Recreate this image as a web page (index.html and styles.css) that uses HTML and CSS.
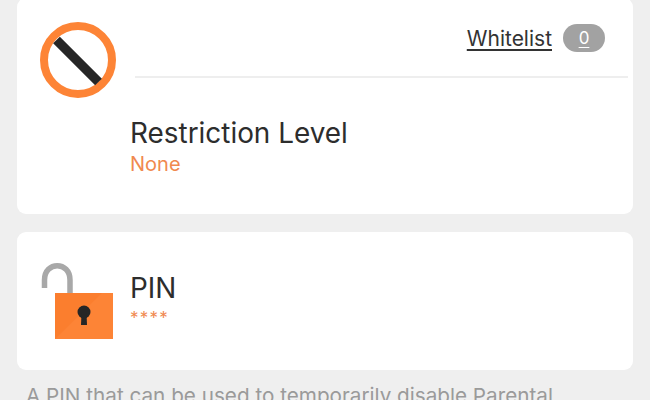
FILE: index.html
```html
<!DOCTYPE html>
<html>
  <head>
    <link rel="stylesheet" href="styles.css">
  </head>
  <body>
    <div class="page">
      <div class="card card-restriction">
        <div class="top-row">
          <svg class="icon-block" viewBox="0 0 76 76">
            <circle cx="38" cy="38" r="34" fill="#fff" stroke="#fd8436" stroke-width="8"/>
            <path d="M16.5 18 L58.5 60" stroke="#262626" stroke-width="9.5" fill="none"/>
          </svg>
          <div class="top-right">
            <div class="whitelist-row">
              <span class="whitelist-link">Whitelist</span>
              <span class="badge">0</span>
            </div>
          </div>
        </div>
        <p class="title">Restriction Level</p>
        <p class="value">None</p>
      </div>

      <div class="card card-pin">
        <svg class="icon-lock" viewBox="0 0 72 76">
          <path d="M3.5 25 V17 C3.5 -2 29 -2 29 17 V32" stroke="#a8a8a8" stroke-width="5.5" fill="none"/>
          <rect x="14" y="30" width="58" height="46" fill="#fd8436"/>
          <path d="M14 76 L61 30 H14 Z" fill="#fb7e2e"/>
          <circle cx="43" cy="49" r="6.5" fill="#262626"/>
          <path d="M40.5 50 H45.5 L46 62 H40 Z" fill="#262626"/>
        </svg>
        <div class="pin-text">
          <p class="title">PIN</p>
          <p class="stars">****</p>
        </div>
      </div>

      <p class="note">A PIN that can be used to temporarily disable Parental Controls.</p>
    </div>
  </body>
</html>
```

FILE: styles.css
```css
html,
body{
  margin: 0;
  height: 400px;
  overflow: hidden;
  background-color: #efefef;
}
body{
  font-family: Inter, "Noto Sans", sans-serif;
}
p{
  margin: 0;
}
.page{
  margin-top: -2px;
  padding: 0 17px;
}
.card{
  background-color: white;
  border-radius: 9px;
}
.card-restriction{
  height: 216px;
  padding-top: 24px;
  box-sizing: border-box;
  margin-bottom: 18px;
}
.top-row{
  display: flex;
  padding-left: 23px;
  padding-right: 5px;
}
.icon-block{
  width: 76px;
  height: 76px;
  flex-shrink: 0;
}
.top-right{
  flex: 1;
  margin-left: 19px;
  height: 54px;
  border-bottom: 2px solid #eeeeee;
}
.whitelist-row{
  display: flex;
  justify-content: flex-end;
  align-items: center;
  gap: 11px;
  padding-top: 2px;
  padding-right: 23px;
  height: 28px;
}
.whitelist-link{
  font-size: 21px;
  color: #333;
  text-decoration: underline;
  text-underline-offset: 3px;
}
.badge{
  width: 42px;
  height: 28px;
  border-radius: 14px;
  background-color: #a2a2a2;
  color: white;
  font-size: 17px;
  text-align: center;
  line-height: 28px;
  text-decoration: underline;
  text-underline-offset: 3px;
}
.title{
  font-size: 27.9px;
  line-height: 34px;
  color: #2d2d2d;
}
.value{
  font-size: 20px;
  line-height: 26px;
  color: #f0894f;
}
.card-restriction .title,
.card-restriction .value{
  margin-left: 113px;
}
.card-restriction .title{
  margin-top: 18px;
}
.card-restriction .value{
  margin-top: 1px;
}
.card-pin{
  height: 138px;
  display: flex;
  padding-left: 24px;
  padding-top: 31px;
  box-sizing: border-box;
}
.icon-lock{
  width: 72px;
  height: 76px;
  flex-shrink: 0;
}
.pin-text{
  margin-left: 17px;
  padding-top: 8px;
}
.stars{
  font-size: 17px;
  line-height: 20px;
  margin-top: 3px;
  letter-spacing: 1.2px;
  color: #f0894f;
}
.note{
  margin: 12px 9px 0;
  font-size: 20.7px;
  line-height: 28px;
  color: #9a9a9a;
}
```
